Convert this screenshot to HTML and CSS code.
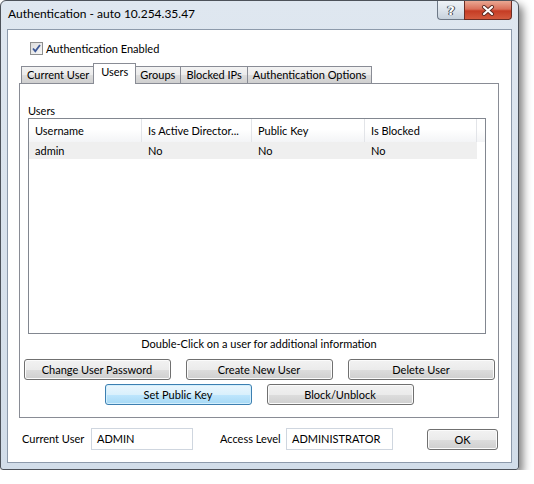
FILE: index.html
```html
<!DOCTYPE html>
<html lang="en">
<head>
    <meta charset="UTF-8">
    <title>Authentication - auto 10.254.35.47</title>
    <link rel="stylesheet" href="styles.css">
</head>
<body>
    <div class="window">
        <div class="titlebar">
            <span class="title">Authentication - auto 10.254.35.47</span>
            <div class="caption-buttons">
                <div class="cap cap-help"><span class="cap-glyph">?</span></div>
                <div class="cap cap-close">
                    <svg width="14" height="11" viewBox="0 0 14 11">
                        <path d="M3 2 L11 9 M11 2 L3 9" stroke="#5a2a22" stroke-width="4" stroke-linecap="round"/>
                        <path d="M3 2 L11 9 M11 2 L3 9" stroke="#fff" stroke-width="2.2" stroke-linecap="round"/>
                    </svg>
                </div>
            </div>
        </div>

        <div class="client">
            <label class="check-row">
                <span class="checkbox">
                    <svg width="13" height="13" viewBox="0 0 13 13">
                        <path d="M3 6.5 L5.3 9.2 L10 3" fill="none" stroke="#3d5897" stroke-width="1.8"/>
                    </svg>
                </span>
                Authentication Enabled
            </label>

            <!-- tab strip -->
            <div class="tabs">
                <div class="tab">Current User</div>
                <div class="tab active">Users</div>
                <div class="tab">Groups</div>
                <div class="tab">Blocked IPs</div>
                <div class="tab">Authentication Options</div>
            </div>

            <div class="tab-panel">
                <div class="group-label">Users</div>
                <div class="listview">
                    <div class="lv-header">
                        <div class="lv-col col-1">Username</div>
                        <div class="lv-col col-2">Is Active Director...</div>
                        <div class="lv-col col-3">Public Key</div>
                        <div class="lv-col col-4">Is Blocked</div>
                        <div class="lv-filler"></div>
                    </div>
                    <div class="lv-row selected">
                        <div class="lv-cell col-1">admin</div>
                        <div class="lv-cell col-2">No</div>
                        <div class="lv-cell col-3">No</div>
                        <div class="lv-cell col-4">No</div>
                    </div>
                </div>
                <div class="hint">Double-Click on a user for additional information</div>
                <div class="button-row">
                    <button class="btn">Change User Password</button>
                    <button class="btn">Create New User</button>
                    <button class="btn">Delete User</button>
                </div>
                <div class="button-row second">
                    <button class="btn focused">Set Public Key</button>
                    <button class="btn">Block/Unblock</button>
                </div>
            </div>

            <!-- current session info -->
            <div class="footer">
                <span class="footer-label user-label">Current User</span>
                <div class="textbox user-box">ADMIN</div>
                <span class="footer-label level-label">Access Level</span>
                <div class="textbox level-box">ADMINISTRATOR</div>
                <button class="btn ok-btn">OK</button>
            </div>
        </div>
    </div>
</body>
</html>
```

FILE: styles.css
```css
body {
    margin: 0;
    background-color: #fff;
    font-family: "Segoe UI", Lato, "Open Sans", sans-serif;
    font-size: 11px;
    color: #000;
}
.window {
    width: 519px;
    height: 470px;
    box-sizing: border-box;
    border: 1px solid #4d525a;
    border-radius: 6px 6px 3px 3px;
    background: linear-gradient(#dfe7f0, #d2dde9);
    box-shadow: 4px 5px 9px rgba(0,0,0,0.5);
    display: flex;
    flex-direction: column;
}
.titlebar {
    height: 28px;
    display: flex;
    align-items: flex-start;
    flex-shrink: 0;
}
.title {
    padding: 5px 0 0 7px;
    font-size: 12px;
    line-height: 16px;
    color: #000;
}
.caption-buttons {
    margin-left: auto;
    margin-right: 6px;
    display: flex;
}
.cap {
    height: 19px;
    box-sizing: border-box;
    border: 1px solid #6d7886;
    border-top: none;
    display: flex;
    align-items: center;
    justify-content: center;
}
.cap-help {
    width: 27px;
    border-radius: 0 0 0 4px;
    border-right: none;
    background: linear-gradient(#eef2f6 0%, #dde4ec 50%, #c6d1dc 100%);
}
.cap-glyph {
    font-family: "DejaVu Sans", sans-serif;
    font-weight: bold;
    font-size: 13px;
    color: #fff;
    text-shadow: 0 0 1px #3c4450, 0 0 1px #3c4450, 1px 0 0 #3c4450, -1px 0 0 #3c4450;
}
.cap-close {
    width: 48px;
    border-radius: 0 0 4px 0;
    border-color: #6b2d24;
    background: linear-gradient(#eaa893 0%, #d9705a 45%, #c53c24 55%, #d35a3e 100%);
}
.client {
    flex: 1;
    margin: 0 6px 6px 6px;
    border: 1px solid #8d9aab;
    background-color: #fff;
}
.check-row {
    display: flex;
    align-items: center;
    height: 13px;
    margin: 12px 0 0 22px;
    line-height: 13px;
}
.checkbox {
    width: 13px;
    height: 13px;
    box-sizing: border-box;
    border: 1px solid #8e8f8f;
    background: linear-gradient(135deg, #dcdcdc, #f8f8f8);
    margin-right: 3px;
    position: relative;
}
.checkbox svg {
    position: absolute;
    left: -1px;
    top: -1px;
}
.tabs {
    display: flex;
    align-items: flex-end;
    height: 20px;
    margin: 8px 0 0 13px;
    position: relative;
    z-index: 1;
}
.tab {
    height: 16px;
    line-height: 16px;
    padding: 0 5px;
    border: 1px solid #898c95;
    border-bottom: none;
    margin-left: -1px;
    background: linear-gradient(#f3f3f3 0%, #ebebeb 50%, #dddddd 51%, #cfcfcf 100%);
}
.tab:first-child {
    margin-left: 0;
}
.tab.active {
    height: 20px;
    line-height: 16px;
    margin: 0 -2px -1px -2px;
    padding: 0 7px;
    background: #fff;
    position: relative;
    z-index: 2;
}
.tab.active + .tab {
    margin-left: 0;
}
.tab-panel {
    width: 480px;
    height: 335px;
    box-sizing: border-box;
    margin-left: 11px;
    border: 1px solid #898c95;
    background-color: #fff;
}
.group-label {
    margin: 20px 0 0 8px;
    line-height: 14px;
}
.listview {
    width: 458px;
    height: 216px;
    box-sizing: border-box;
    margin-left: 8px;
    border: 1px solid #828790;
}
.lv-header {
    display: flex;
    height: 23px;
    background: linear-gradient(#fff 0%, #fff 45%, #f3f4f6 100%);
}
.lv-col {
    line-height: 24px;
    padding-left: 6px;
    box-sizing: border-box;
    border-right: 1px solid #e2e4e8;
    white-space: nowrap;
    overflow: hidden;
}
.lv-filler {
    flex: 1;
}
.col-1 { width: 113px; }
.col-2 { width: 110px; }
.col-3 { width: 113px; }
.col-4 { width: 112px; }
.lv-row {
    display: flex;
    height: 17px;
    width: 448px;
}
.lv-row.selected {
    background-color: #efefef;
}
.lv-cell {
    line-height: 18px;
    padding-left: 6px;
    box-sizing: border-box;
}
.hint {
    margin-top: 3px;
    line-height: 14px;
    text-align: center;
}
.button-row {
    display: flex;
    justify-content: center;
    gap: 15px;
    margin-top: 8px;
}
.button-row.second {
    margin-top: 4px;
}
.btn {
    width: 147px;
    height: 21px;
    padding: 0;
    font-family: inherit;
    font-size: 11px;
    color: #000;
    border: 1px solid #707070;
    border-radius: 3px;
    background: linear-gradient(#f2f2f2 0%, #ebebeb 50%, #dddddd 51%, #cfcfcf 100%);
    box-shadow: inset 0 0 0 1px #fbfbfb;
}
.btn.focused {
    border-color: #3c7fb1;
    background: linear-gradient(#eaf6fd 0%, #d9f0fc 50%, #bee6fd 51%, #a7d9f5 100%);
    box-shadow: inset 0 0 0 1px #d3effd;
}
.footer {
    display: flex;
    align-items: center;
    margin-top: 10px;
}
.footer-label {
    line-height: 14px;
    white-space: nowrap;
}
.user-label {
    width: 69px;
    margin-left: 14px;
}
.level-label {
    width: 66px;
    margin-left: 27px;
}
.textbox {
    height: 22px;
    box-sizing: border-box;
    border: 1px solid #cfd6df;
    padding: 3px 0 0 5px;
    line-height: 14px;
}
.user-box {
    width: 102px;
}
.level-box {
    width: 107px;
}
.ok-btn {
    width: 71px;
    margin-left: auto;
    margin-right: 13px;
}
```
